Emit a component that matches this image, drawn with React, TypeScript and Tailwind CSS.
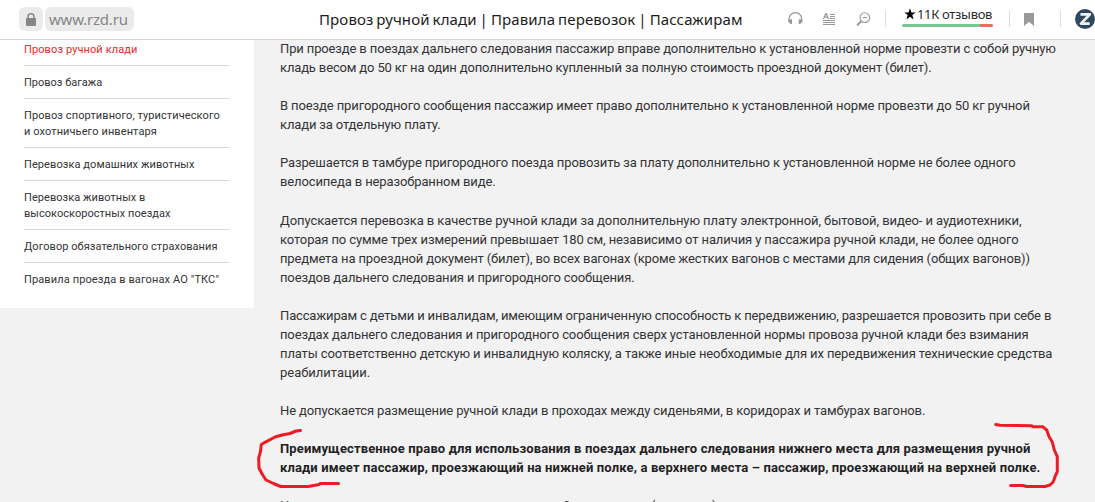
const menu = [
  { active: true, lines: [['Провоз ручной клади', 'tracking-[0.105px]']] },
  { lines: [['Провоз багажа', 'tracking-[0px]']] },
  {
    lines: [
      ['Провоз спортивного, туристического', 'tracking-[0.1px]'],
      ['и охотничьего инвентаря', 'tracking-[0.1px]'],
    ],
  },
  { lines: [['Перевозка домашних животных', 'tracking-[0.085px]']] },
  {
    lines: [
      ['Перевозка животных в', 'tracking-[0.055px]'],
      ['высокоскоростных поездах', 'tracking-[0.04px]'],
    ],
  },
  { lines: [['Договор обязательного страхования', 'tracking-[0.055px]']] },
  { lines: [['Правила проезда в вагонах АО "ТКС"', 'tracking-[0.12px]']] },
];

const paragraphs = [
  {
    lines: [
      ['При проезде в поездах дальнего следования пассажир вправе дополнительно к установленной норме провезти с собой ручную', 'tracking-[-0.134px]'],
      ['кладь весом до 50 кг на один дополнительно купленный за полную стоимость проездной документ (билет).', 'tracking-[-0.149px]'],
    ],
  },
  {
    lines: [
      ['В поезде пригородного сообщения пассажир имеет право дополнительно к установленной норме провезти до 50 кг ручной', 'tracking-[-0.11px]'],
      ['клади за отдельную плату.', 'tracking-[-0.144px]'],
    ],
  },
  {
    lines: [
      ['Разрешается в тамбуре пригородного поезда провозить за плату дополнительно к установленной норме не более одного', 'tracking-[-0.127px]'],
      ['велосипеда в неразобранном виде.', 'tracking-[-0.12px]'],
    ],
  },
  {
    lines: [
      ['Допускается перевозка в качестве ручной клади за дополнительную плату электронной, бытовой, видео- и аудиотехники,', 'tracking-[-0.086px]'],
      ['которая по сумме трех измерений превышает 180 см, независимо от наличия у пассажира ручной клади, не более одного', 'tracking-[-0.106px]'],
      ['предмета на проездной документ (билет), во всех вагонах (кроме жестких вагонов с местами для сидения (общих вагонов))', 'tracking-[-0.148px]'],
      ['поездов дальнего следования и пригородного сообщения.', 'tracking-[-0.128px]'],
    ],
  },
  {
    lines: [
      ['Пассажирам с детьми и инвалидам, имеющим ограниченную способность к передвижению, разрешается провозить при себе в', 'tracking-[-0.146px]'],
      ['поездах дальнего следования и пригородного сообщения сверх установленной нормы провоза ручной клади без взимания', 'tracking-[-0.134px]'],
      ['платы соответственно детскую и инвалидную коляску, а также иные необходимые для их передвижения технические средства', 'tracking-[-0.122px]'],
      ['реабилитации.', 'tracking-[0px]'],
    ],
  },
  {
    lines: [['Не допускается размещение ручной клади в проходах между сиденьями, в коридорах и тамбурах вагонов.', 'tracking-[-0.116px]']],
  },
  {
    bold: true,
    lines: [
      ['Преимущественное право для использования в поездах дальнего следования нижнего места для размещения ручной', 'tracking-[0.134px]'],
      ['клади имеет пассажир, проезжающий на нижней полке, а верхнего места – пассажир, проезжающий на верхней полке.', 'tracking-[0.134px]'],
    ],
  },
];

function Divider() {
  return <div className="mt-[11px] h-4 w-px shrink-0 bg-[#dcdcdc]" />;
}

function AddressBar() {
  return (
    <header className="flex h-10 shrink-0 items-start border-b border-[#d9d9d9] bg-white font-['Noto_Sans',sans-serif] whitespace-nowrap">
      <div className="mt-[7px] ml-[19px] flex w-[300px] shrink-0 gap-0.5">
        <span className="flex h-6 w-6 items-center justify-center rounded-md bg-[#ebebeb]">
          <svg width="10" height="13" viewBox="0 0 10 13" fill="none">
            <path d="M2 6V3.8a3 3 0 0 1 6 0V6" stroke="#868686" strokeWidth="1.5" />
            <rect y="5" width="10" height="8" rx="1" fill="#868686" />
          </svg>
        </span>
        <span className="h-6 w-[89px] rounded-md bg-[#ebebeb] pl-1 text-[15px] leading-[25px] tracking-[-0.2px] text-[#858585]">
          www.rzd.ru
        </span>
      </div>

      <h1 className="mt-[7px] w-[469px] shrink-0 text-[15px] leading-[25px] tracking-[0.12px] text-[#1c1c1c] [word-spacing:-1.1px]">
        Провоз ручной клади | Правила перевозок | Пассажирам
      </h1>

      <svg className="mt-3 shrink-0" width="15" height="14" viewBox="0 0 15 14" fill="none">
        <path d="M1 9V7a6.3 6.3 0 0 1 12.8 0v2" stroke="#999" strokeWidth="1.2" />
        <path d="M1 7.3h3V12H2.6L.4 10V8zM13.8 7.3h-3V12h1.4l2.2-2V8z" fill="#999" />
      </svg>
      <svg className="mt-[13px] ml-5 shrink-0" width="12" height="12" viewBox="0 0 12 12" fill="none" stroke="#999">
        <path d="M.4 6 2.8.5h.4L5.6 6M1.2 4.2h3.6" strokeWidth="1.2" />
        <path d="M7 1.5h5M7 3.5h5M7 5.5h5M0 7.5h12M0 9.5h12M0 11.5h12" />
      </svg>
      <svg className="mt-3 ml-[21px] shrink-0" width="15" height="15" viewBox="0 0 15 15" fill="none" stroke="#999">
        <circle cx="8.8" cy="5.6" r="4.8" strokeWidth="1.1" />
        <path d="M6.5 5.5h4.6" strokeWidth="1.1" />
        <path d="M5 9.3 1.2 13.2" strokeWidth="2" />
      </svg>

      <div className="ml-3.5">
        <Divider />
      </div>

      <div className="mt-1.5 ml-4 w-[91px] shrink-0">
        <div className="flex h-[18px] items-start pl-0.5">
          <svg className="mt-0.5 shrink-0" width="12" height="12" viewBox="0 0 12 12">
            <path d="M6 .3 7.5 4.4h4.2L8.3 7l1.3 4.4L6 8.8l-3.6 2.6L3.7 7 .3 4.4h4.2z" />
          </svg>
          <span className="ml-px text-[13px] leading-[17px] tracking-[-0.32px] text-[#2b2b2b]">11К отзывов</span>
        </div>
        <div className="flex h-[3px] overflow-hidden rounded-full">
          <span className="w-[78px] bg-[#78c896]" />
          <span className="flex-1 bg-[#f1685c]" />
        </div>
      </div>

      <div className="ml-4">
        <Divider />
      </div>
      <svg className="mt-[13px] ml-3.5 shrink-0" width="10" height="13" viewBox="0 0 10 13">
        <path d="M0 0h10v13L5 8.8 0 13z" fill="#999" />
      </svg>
      <div className="ml-[26px]">
        <Divider />
      </div>
      <svg className="mt-[9px] ml-3.5 shrink-0" width="20" height="20" viewBox="0 0 20 20">
        <circle cx="10" cy="10" r="10" fill="#30485e" />
        <path d="M5.5 5.4h9.3L6 14.6h8.7" fill="none" stroke="#eef2f5" strokeWidth="2.8" strokeLinejoin="round" />
      </svg>
    </header>
  );
}

function Sidebar() {
  return (
    <nav className="h-[268px] w-[254px] shrink-0 bg-white pl-6 text-[11px] leading-4">
      <ul className="-mt-[7px] w-[205px] divide-y divide-[#d7d8db]">
        {menu.map((item, i) => (
          <li key={i} className={item.active ? 'pt-[9px] pb-[7px] text-[#e52a2a]' : 'pt-[9px] pb-[7px] text-[#333335]'}>
            {item.lines.map(([text, tracking]) => (
              <p key={text} className={tracking}>
                {text}
              </p>
            ))}
          </li>
        ))}
      </ul>
    </nav>
  );
}

function Article() {
  return (
    <article className="-mt-[0.85px] flex flex-col gap-[19.05px] pl-[26px] text-[13px] leading-[19.05px] text-[#333335]">
      {paragraphs.map((paragraph, i) => (
        <div key={i} className={paragraph.bold ? 'font-bold text-[#222224]' : 'font-normal'}>
          {paragraph.lines.map(([text, tracking]) => (
            <p key={text} className={tracking}>
              {text}
            </p>
          ))}
        </div>
      ))}
      {/* next paragraph, cut off by the bottom of the window */}
      <div className="flex">
        <span className="w-[283px]">Н</span>
        <span className="w-[88px]">й</span>
        <span className="w-[61px]">(</span>
        <span>)</span>
      </div>
    </article>
  );
}

function Marker() {
  return (
    <svg
      className="pointer-events-none absolute inset-0"
      width="1095"
      height="502"
      viewBox="0 0 1095 502"
      fill="none"
      stroke="#ed1c24"
      strokeWidth="3"
      strokeLinecap="round"
      strokeLinejoin="round"
    >
      <path d="M300.5 430.5 296 431 290 433.5 282 435 275 437 265 442.3 261.3 444.5 260.5 451.5 258.7 458 259 468 262.7 475 266 480 273.5 483.5 280.7 486.5H308.3L319.3 484.5 320 483.5H338.5" />
      <path d="M995.7 424.5 1000 425.3 1031.7 425.7 1033 426.7H1042.7L1046.7 430 1049 436.5 1052.3 442 1054.3 450 1057.3 456.7V471.7L1055 476.7 1053.3 481.7 1050 485 1045 486.5H1026.7L1023 485.5H1010.7" />
    </svg>
  );
}

export default function App() {
  return (
    <div className="relative flex h-[502px] w-[1095px] flex-col overflow-hidden bg-[#f2f2f2]">
      <AddressBar />
      <main className="flex min-h-0 flex-1 items-start overflow-hidden font-['Roboto',sans-serif] whitespace-nowrap">
        <Sidebar />
        <Article />
      </main>
      <Marker />
    </div>
  );
}
